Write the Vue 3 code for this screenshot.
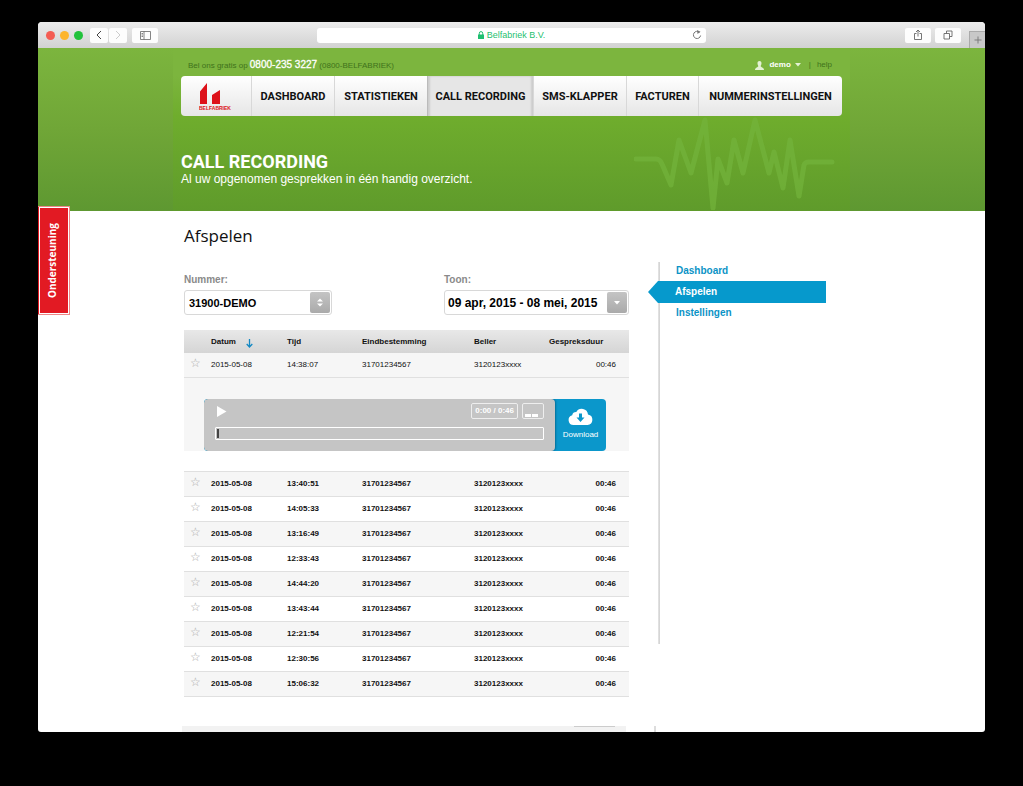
<script setup>
import { ref } from 'vue'

const navItems = [
  { label: 'DASHBOARD' },
  { label: 'STATISTIEKEN' },
  { label: 'CALL RECORDING', active: true },
  { label: 'SMS-KLAPPER' },
  { label: 'FACTUREN' },
  { label: 'NUMMERINSTELLINGEN' },
]
const sideItems = [{ label: 'Dashboard' }, { label: 'Afspelen', active: true }, { label: 'Instellingen' }]
const times = ['13:40:51', '14:05:33', '13:16:49', '12:33:43', '14:44:20', '13:43:44', '12:21:54', '12:30:56', '15:06:32']
const number = ref('31900-DEMO')
const position = ref(0)
</script>

<template>
  <div class="desktop">
    <div class="window">
      <div class="toolbar">
        <div class="lights"><i class="red"></i><i class="amber"></i><i class="green"></i></div>
        <div class="history">
          <button class="tool" aria-label="Vorige"><svg width="8" height="12" viewBox="0 0 8 12"><path d="M6 2L2 6l4 4" stroke="#444" /></svg></button>
          <button class="tool" aria-label="Volgende"><svg width="8" height="12" viewBox="0 0 8 12"><path d="M2 2l4 4-4 4" stroke="#ccc" /></svg></button>
        </div>
        <button class="tool wide" aria-label="Zijbalk"><svg width="11" height="9" viewBox="0 0 11 9"><path d="M.5.5h10v8H.5zM4 .5v8M1.5 2.5h1.500M1.500 4h1.500M1.500 5.500h1.500" stroke="#666" stroke-width=".8" /></svg></button>
        <div class="address">
          <span class="site">
            <svg width="6" height="8" viewBox="0 0 6 8"><path d="M0 3.500h6V8H0z" fill="#1fbf70" /><path d="M1.300 4V2.300a1.700 1.700 0 0 1 3.400 0V4" stroke="#1fbf70" /></svg>
            Belfabriek B.V.
          </span>
          <button class="reload" aria-label="Herladen"><svg width="10" height="10" viewBox="0 0 10 10"><path d="M7.500 2.300A3.600 3.600 0 1 0 8.600 5.500" stroke="#777" /><path d="M5 0l3.500 1.800L5.500 4z" fill="#777" /></svg></button>
        </div>
        <button class="tool wide share" aria-label="Delen"><svg width="10" height="12" viewBox="0 0 10 12"><path d="M3.500 4.500h-2v6h7v-6h-2M5 7.500V1M3 3l2-2 2 2" stroke="#666" stroke-width=".9" /></svg></button>
        <button class="tool wide" aria-label="Tabbladen"><svg width="10" height="10" viewBox="0 0 10 10"><path d="M1 3.500h5.500V9H1zM3.500 3.500V1H9v5.500H6.500" stroke="#666" stroke-width=".9" /></svg></button>
        <button class="newtab" aria-label="Nieuw tabblad"><svg width="8" height="8" viewBox="0 0 8 8"><path d="M4 0.500v7M.5 4h7" stroke="#777" stroke-width=".9" /></svg></button>
      </div>

      <header class="hero">
        <div class="hero-inner">
          <div class="topline">
            <p>Bel ons gratis op <strong>0800-235 3227</strong> (0800-BELFABRIEK)</p>
            <div class="account">
              <svg width="9" height="9" viewBox="0 0 9 9"><path d="M4.500 0C6 0 6.600 1 6.500 2.500 6.400 3.800 5.700 4.600 5.700 5.200 5.700 6.200 9 6.200 9 9H0C0 6.200 3.300 6.200 3.300 5.200 3.300 4.600 2.600 3.800 2.500 2.500 2.400 1 3 0 4.500 0z" fill="#e4f1d5" /></svg>
              <a href="#" class="user">demo</a>
              <svg width="6" height="4" viewBox="0 0 6 4"><path d="M0 0h6L3 3.500z" fill="#e4f1d5" /></svg>
              <span class="bar">|</span>
              <a href="#">help</a>
            </div>
          </div>
          <nav class="nav">
            <a href="#" class="logo" aria-label="Belfabriek home">
              <svg width="34" height="28" viewBox="0 0 34 28">
                <path d="M1 21V8.500L8 0V21zM13 21V12L21 7V21z" fill="#dd1119" />
                <text x="0" y="27" font-size="5" font-weight="700" fill="#dd1119">BELFABRIEK</text>
              </svg>
            </a>
            <a v-for="item in navItems" :key="item.label" href="#" :class="{ active: item.active }">{{ item.label }}</a>
          </nav>
          <div class="intro">
            <div>
              <h1>CALL RECORDING</h1>
              <p>Al uw opgenomen gesprekken in één handig overzicht.</p>
            </div>
            <svg class="pulse" width="202" height="94" viewBox="0 0 202 94"><path d="M2 43H22Q26 43 28 48L37 69L45 24L57 57L71 4L79 92L84 43L93 67L100 24L109 57L121 4L135 57L140 36L149 72L156 24L165 80L170 49Q171 46 175 46H198" stroke="#74b43c" stroke-width="5" stroke-linejoin="round" stroke-linecap="round" opacity=".7" /></svg>
          </div>
        </div>
      </header>

      <a href="#" class="support">Ondersteuning</a>

      <main class="content">
        <section class="recordings">
          <h2>Afspelen</h2>
          <div class="filters">
            <div class="field">
              <label for="number">Nummer:</label>
              <div class="box number">
                <select id="number" v-model="number"><option>31900-DEMO</option></select>
                <span class="knob"><svg width="8" height="9" viewBox="0 0 8 9"><path d="M1 3.500L4 .5l3 3zM1 5.500l3 3 3-3z" fill="#fff" /></svg></span>
              </div>
            </div>
            <div class="field">
              <label for="range">Toon:</label>
              <button id="range" class="box date" aria-haspopup="dialog">
                <span>09 apr, 2015 - 08 mei, 2015</span>
                <span class="knob"><svg width="6" height="4" viewBox="0 0 6 4"><path d="M0 0h6L3 3.500z" fill="#fff" /></svg></span>
              </button>
            </div>
          </div>

          <table>
            <colgroup><col class="c-star" /><col class="c-date" /><col class="c-time" /><col class="c-dest" /><col class="c-caller" /><col /></colgroup>
            <thead>
              <tr>
                <th></th>
                <th>Datum <svg class="sort" width="7" height="9" viewBox="0 0 7 9"><path d="M3.500 0v7.500M.7 5l2.800 3L6.300 5" stroke="#1489c4" stroke-width="1.300" /></svg></th>
                <th>Tijd</th><th>Eindbestemming</th><th>Beller</th><th>Gespreksduur</th>
              </tr>
            </thead>
            <tbody>
              <tr class="open">
                <td class="star">☆</td><td>2015-05-08</td><td>14:38:07</td><td>31701234567</td><td>3120123xxxx</td><td class="duration">00:46</td>
              </tr>
              <tr class="detail">
                <td colspan="6">
                  <div class="player">
                    <div class="controls">
                      <div class="upper">
                        <button class="play" aria-label="Afspelen"><svg width="10" height="11" viewBox="0 0 10 11"><path d="M0 0l9.500 5.500L0 11z" fill="#fff" /></svg></button>
                        <span class="clock">0:00 / 0:46</span>
                        <button class="volume" aria-label="Volume"><i></i><i></i></button>
                      </div>
                      <input v-model="position" type="range" min="0" max="46" aria-label="Positie" />
                    </div>
                    <a href="#" class="download">
                      <svg width="25" height="17" viewBox="0 0 25 17"><path d="M5.500 17a5 5 0 0 1-1.300-9.800A4 4 0 0 1 8.300 4 6.300 6.300 0 0 1 20 6.500 5.300 5.300 0 0 1 19.500 17z" fill="#fff" /><path d="M11 5.500h3v4h2.500L12.500 14 8.500 9.500H11z" fill="#0b97cb" /></svg>
                      Download
                    </a>
                  </div>
                </td>
              </tr>
              <tr class="spacer"><td colspan="6"></td></tr>
            </tbody>
            <tbody class="list">
              <tr v-for="time in times" :key="time">
                <td class="star">☆</td><td>2015-05-08</td><td>{{ time }}</td><td>31701234567</td><td>3120123xxxx</td><td class="duration">00:46</td>
              </tr>
            </tbody>
          </table>
          <div class="pager"><i></i></div>
        </section>

        <aside>
          <a v-for="item in sideItems" :key="item.label" href="#" :class="{ active: item.active }">{{ item.label }}</a>
        </aside>
      </main>
    </div>
  </div>
</template>

<style>
body { margin: 0; background: #000; }
</style>

<style scoped>
* { box-sizing: border-box; }
h1, h2, p { margin: 0; }
a { color: inherit; text-decoration: none; }
button { border: 0; padding: 0; margin: 0; font: inherit; color: inherit; background: none; }
svg { fill: none; display: block; flex: none; }
.desktop { height: 100vh; padding: 22px 38px 54px; background: #000; font: 8px/12px "Liberation Sans", Arial, sans-serif; color: #111; display: flex; }
.window { position: relative; flex: 1; min-width: 0; overflow: hidden; background: #fff; border-radius: 4px 4px 3px 3px; display: flex; flex-direction: column; }

.toolbar { flex: none; height: 26px; display: flex; align-items: center; padding-left: 8px; background: linear-gradient(#ececec, #d2d2d2); }
.lights { display: flex; gap: 5px; margin-right: 7px; }
.lights i { width: 9px; height: 9px; border-radius: 50%; }
.red { background: #f45c53; }
.amber { background: #fdb52c; }
.green { background: #21c23b; }
.history { display: flex; gap: 1px; margin-right: 5px; }
.tool { width: 18px; height: 15px; background: #fdfdfd; border-radius: 2px; display: flex; align-items: center; justify-content: center; }
.wide { width: 26px; }
.address { flex: 1; height: 15px; margin: 0 199px 0 159px; background: #fff; border-radius: 3px; display: flex; align-items: center; justify-content: center; position: relative; }
.site { display: flex; align-items: center; gap: 3px; font-size: 9px; color: #1fbf70; }
.reload { position: absolute; right: 4px; top: 2px; }
.share { margin-right: 4px; }
.newtab { width: 16px; height: 17px; margin-left: 8px; align-self: flex-end; border: 1px solid #aaa; border-width: 1px 0 0 1px; background: #c8c8c8; display: flex; align-items: center; justify-content: center; }

.hero { flex: none; background: linear-gradient(#7cb53e, #70a637 50%, #5e9831); display: flex; justify-content: center; }
.hero-inner { width: 677px; max-width: 100%; padding: 8px 8px 0; background: linear-gradient(#7cb53e 28px, #6fad2d 68px, #5f9b2b); }
.topline { height: 18px; margin-bottom: 2px; padding: 0 10px 0 7px; display: flex; justify-content: space-between; align-items: center; color: #40731b; }
.topline p { line-height: 14px; }
.topline strong { font-size: 10px; font-weight: 400; color: #fff; -webkit-text-stroke: 0.3px #fff; }
.account { display: flex; align-items: center; gap: 4px; }
.user { color: #fff; font-weight: 700; margin-left: 1px; }
.bar { margin: 0 2px 0 4px; }
.nav { height: 40px; display: grid; grid-template-columns: 70fr 83fr 93fr 106fr 93fr 72fr 144fr; border-radius: 4px; overflow: hidden; background: linear-gradient(#fff, #e6e6e6); font: 700 11px/41px Roboto, "Open Sans", sans-serif; color: #111; }
.nav a { display: flex; justify-content: center; white-space: nowrap; border-left: 1px solid #d8d8d8; }
.nav .logo { border: 0; align-items: center; font-family: "Liberation Sans", sans-serif; }
.nav .active { background: #e6e6e6; border-color: #bbb; box-shadow: inset 2px 0 2px #ccc, inset -2px 0 2px #ccc; }
.intro { height: 95px; display: flex; justify-content: space-between; color: #fff; }
.intro h1 { margin-top: 36px; font: 700 18px/20px Roboto, "Open Sans", sans-serif; }
.intro p { font-size: 12px; line-height: 14px; }
.pulse { margin-right: 6px; }

.support { position: absolute; left: 0; top: 184px; width: 32px; height: 109px; background: #e21a23; border: 1px solid #e88; outline: 1px solid #fff; outline-offset: -2px; color: #fff; font: 700 10px/28px "Open Sans", sans-serif; text-align: center; writing-mode: vertical-rl; transform: rotate(180deg); border-width: 1px 0 1px 1px; }

.content { flex: 1; min-height: 0; width: 661px; max-width: 100%; margin: 0 auto; padding: 0 16px 0 3px; display: flex; justify-content: space-between; }
.recordings { width: 445px; }
h2 { margin-top: 13px; font: 400 17px/24px "Open Sans", Roboto, sans-serif; }
.filters { margin-top: 26px; display: flex; justify-content: space-between; }
.field { display: flex; flex-direction: column; gap: 4px; }
.field label { font-size: 10px; font-weight: 700; color: #8a8a8a; }
.box { height: 25px; border: 1px solid #d8d8d8; border-radius: 3px; background: #fff; display: flex; align-items: center; justify-content: space-between; color: #000; font-weight: 700; position: relative; padding: 0 1px 0 3px; }
.number { width: 148px; }
.date { width: 185px; font-size: 12px; }
select { appearance: none; border: 0; padding: 0 0 0 1px; margin: 0; background: none; flex: 1; font: 700 11px/16px "Liberation Sans", sans-serif; color: #000; }
.knob { width: 20px; height: 21px; border-radius: 2px; background: linear-gradient(#c4c4c4, #aaa); display: flex; align-items: center; justify-content: center; pointer-events: none; }

table { width: 100%; margin-top: 15px; border-collapse: separate; border-spacing: 0; table-layout: fixed; }
.c-star { width: 27px; }
.c-date { width: 76px; }
.c-time { width: 75px; }
.c-dest { width: 112px; }
.c-caller { width: 75px; }
th, td { padding: 0; text-align: left; white-space: nowrap; }
thead tr { background: linear-gradient(#e8e8e8, #d5d5d5); }
th { height: 23px; }
.sort { display: inline-block; margin-left: 8px; vertical-align: -4px; }
.open td, .list td { height: 25px; border-bottom: 1px solid #e0e0e0; }
.open, .detail, .list tr:nth-child(odd) { background: #f6f6f6; }
.list { font-weight: 700; }
.list tr:first-child td { height: 26px; border-top: 1px solid #e0e0e0; }
td.star { padding: 0 0 4px 6px; font: 400 12px/12px "DejaVu Sans", sans-serif; color: #aaa; }
td.duration { text-align: right; padding-right: 13px; }
.detail td { height: 73px; padding: 21px 23px 0 20px; vertical-align: top; }
.spacer td { height: 20px; }
.player { height: 52px; display: flex; background: #0b97cb; border-radius: 4px; overflow: hidden; }
.controls { flex: 1; background: #c5c5c5; border-radius: 4px; padding: 4px 11px 0; box-shadow: 1px 0 2px #056f99; }
.upper { height: 16px; display: flex; align-items: center; gap: 4px; margin-bottom: 8px; }
.play { margin-left: 2px; margin-right: auto; }
.clock { height: 16px; padding: 0 3px; border: 1px solid #eee; border-radius: 2px; color: #fff; font-weight: 700; line-height: 14px; }
.volume { width: 22px; height: 16px; border: 1px solid #eee; border-radius: 2px; display: flex; align-items: flex-end; gap: 1px; padding: 0 2px 1px; }
.volume i { width: 6px; height: 3px; background: #fff; }
input[type="range"] { appearance: none; display: block; width: 100%; height: 13px; margin: 0; border: 1px solid #fff; border-radius: 1px; background: transparent; padding: 1px; }
input[type="range"]::-webkit-slider-thumb { appearance: none; width: 2px; height: 9px; background: #444; }
.download { width: 51px; display: flex; flex-direction: column; align-items: center; gap: 4px; padding-top: 9px; color: #fff; }
.pager { position: relative; height: 20px; margin: 29px 3px 0 -2px; background: #f2f2f2; display: flex; justify-content: flex-end; padding-right: 11px; }
.pager i { width: 41px; height: 1px; background: #ccc; }
.pager::after { content: ""; position: absolute; left: calc(100% + 28px); top: 0; width: 2px; height: 100%; background: #ddd; }

aside { width: 168px; height: 382px; margin-top: 51px; padding-top: 2px; background: linear-gradient(90deg, #e6e6e6, #d0d0d0) left / 2px 100% no-repeat; font-size: 10px; line-height: 14px; font-weight: 700; color: #0b93c6; display: flex; flex-direction: column; align-items: flex-start; gap: 3px; }
aside a { padding-left: 18px; }
aside .active { align-self: stretch; margin-left: -10px; padding-left: 27px; line-height: 22px; color: #fff; background: #0699cc; clip-path: polygon(10px 0, 100% 0, 100% 100%, 10px 100%, 0 50%); }
</style>
